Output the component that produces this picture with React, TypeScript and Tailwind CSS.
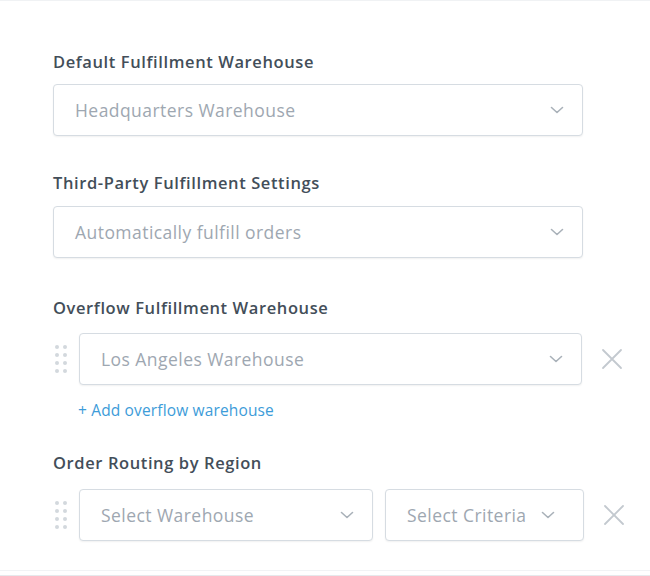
import React from "react";

const Chevron = () => (
  <svg width="14" height="8" viewBox="0 0 14 8" fill="none" className="shrink-0">
    <path d="M1.5 1.5 L7 6.5 L12.5 1.5" stroke="#a9b1b9" strokeWidth="1.6" strokeLinecap="round" strokeLinejoin="round" />
  </svg>
);

const Close = () => (
  <svg width="22" height="22" viewBox="0 0 22 22" fill="none" className="shrink-0">
    <path d="M2 2 L20 20 M20 2 L2 20" stroke="#c3c9cf" strokeWidth="1.8" strokeLinecap="round" />
  </svg>
);

const Handle = () => (
  <div className="grid grid-cols-2 gap-x-[4px] gap-y-[4px] w-[12px]">
    {Array.from({ length: 8 }).map((_, i) => (
      <span key={i} className="block w-[4px] h-[4px] rounded-full bg-[#d3d8dd]" />
    ))}
  </div>
);

const Select = ({ text, className = "", px = "pl-[21px] pr-[18px]" }: { text: string; className?: string; px?: string }) => (
  <div
    className={`h-[52px] flex items-center justify-between border border-[#d6dce2] rounded-[4px] bg-white shadow-[0_1px_2px_rgba(0,0,0,0.06)] ${px} ${className}`}
  >
    <span className="text-[17.5px] text-[#9ea7b1] tracking-[0.45px] whitespace-nowrap">{text}</span>
    <Chevron />
  </div>
);

const Label = ({ children, className = "" }: { children: React.ReactNode; className?: string }) => (
  <div className={`text-[16.5px] leading-[20px] font-semibold text-[#434e59] tracking-[0.6px] ${className}`}>{children}</div>
);

export default function App() {
  return (
    <div
      className="w-[650px] h-[576px] bg-white relative overflow-hidden"
      style={{ fontFamily: "'Open Sans', 'Liberation Sans', sans-serif" }}
    >
      <div className="absolute top-0 left-0 right-0 h-[1px] bg-[#f0f2f4]" />
      <div className="pl-[53px] pt-[52px]">
        <Label className="mb-[12px]">Default Fulfillment Warehouse</Label>
        <Select text="Headquarters Warehouse" className="w-[530px]" />

        <Label className="mt-[37px] mb-[13px]">Third-Party Fulfillment Settings</Label>
        <Select text="Automatically fulfill orders" className="w-[530px]" />

        <Label className="mt-[40px] mb-[15px]">Overflow Fulfillment Warehouse</Label>
        <div className="flex items-center">
          <div className="w-[26px] pl-[2px]">
            <Handle />
          </div>
          <Select text="Los Angeles Warehouse" className="w-[503px]" />
          <div className="ml-[19px]">
            <Close />
          </div>
        </div>
        <div className="mt-[15px] ml-[25px] text-[15.5px] leading-[20px] text-[#3d9cd9] tracking-[0.15px]">+ Add overflow warehouse</div>

        <Label className="mt-[33px] mb-[16px]">Order Routing by Region</Label>
        <div className="flex items-center">
          <div className="w-[26px] pl-[2px]">
            <Handle />
          </div>
          <Select text="Select Warehouse" className="w-[294px]" />
          <Select text="Select Criteria" className="w-[199px] ml-[12px]" px="pl-[21px] pr-[28px]" />
          <div className="ml-[19px]">
            <Close />
          </div>
        </div>
      </div>
      <div className="absolute left-0 right-0 top-[570px] h-[1px] bg-[#f1f3f5]" />
      <div className="absolute left-0 right-0 top-[575px] h-[1px] bg-[#e6e9ec]" />
    </div>
  );
}
